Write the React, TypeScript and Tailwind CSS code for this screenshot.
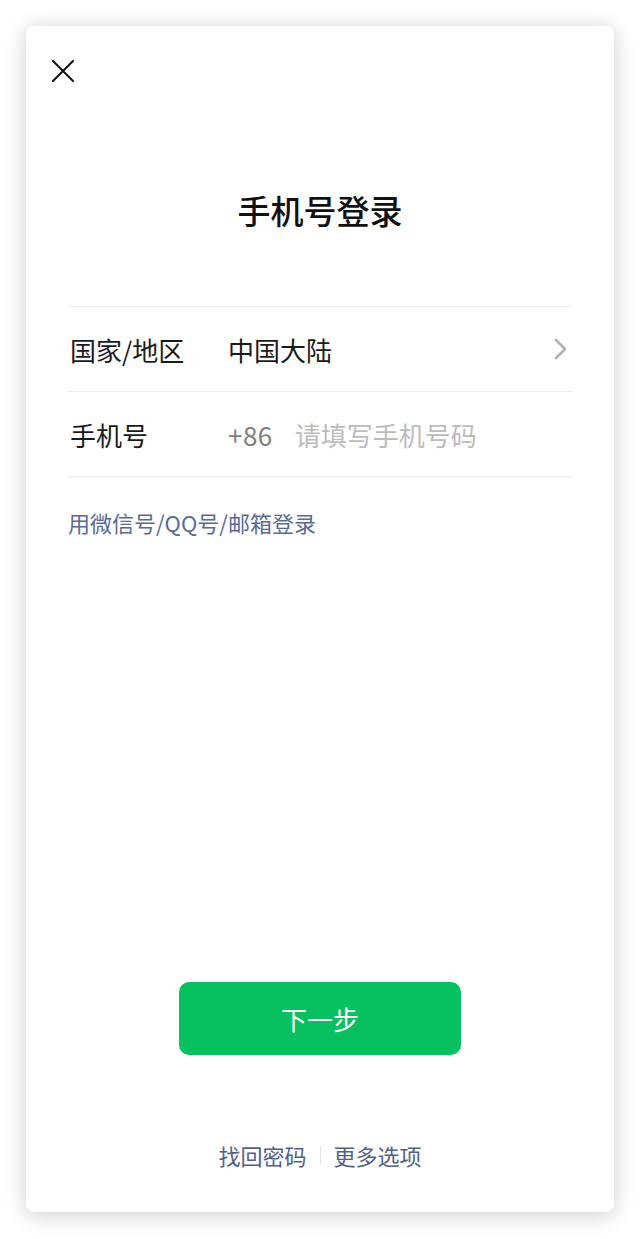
const font = { fontFamily: '"Noto Sans CJK SC", "Noto Sans", sans-serif' };

function CloseIcon() {
  return (
    <svg width="22" height="22" viewBox="0 0 22 22" className="text-[#111]">
      <path d="M1 1 L21 21 M21 1 L1 21" stroke="currentColor" strokeWidth="2" strokeLinecap="round" fill="none" />
    </svg>
  );
}

function Chevron() {
  return (
    <svg width="14" height="22" viewBox="0 0 14 22" className="mr-[4px] text-[#b2b2b2]">
      <path d="M2 2 L11 11 L2 20" stroke="currentColor" strokeWidth="2.6" strokeLinecap="round" strokeLinejoin="round" fill="none" />
    </svg>
  );
}

function FormRow({ label, children }: { label: string; children: React.ReactNode }) {
  return (
    <div className="flex h-[85px] items-center border-b border-[#ededed]">
      <div className="w-[160px] pl-[2px] text-[26px] text-[#1a1a1a]">{label}</div>
      <div className="flex flex-1 items-center">{children}</div>
    </div>
  );
}

export default function App() {
  return (
    <div className="min-h-[1239px] bg-white px-[26px] pt-[26px] pb-[27px]" style={font}>
      <div className="flex h-[1186px] flex-col rounded-[8px] bg-white shadow-[0_3px_22px_rgba(0,0,0,0.2)]">
        <div className="pl-[26px] pt-[34px]">
          <CloseIcon />
        </div>

        <h1 className="mt-[108px] text-center text-[33px] font-medium leading-[40px] text-[#111]">
          手机号登录
        </h1>

        <div className="mx-[42px] mt-[76px] border-t border-[#ededed]">
          <FormRow label="国家/地区">
            <span className="flex-1 text-[26px] text-[#1a1a1a]">中国大陆</span>
            <Chevron />
          </FormRow>
          <FormRow label="手机号">
            <span className="text-[26px] tracking-[0.5px] text-[#7f7f7f]">+86</span>
            <span className="ml-[22px] text-[26px] text-[#bcbcbc]">请填写手机号码</span>
          </FormRow>
        </div>

        <a className="mx-[42px] mt-[30px] text-[22px] leading-[30px] text-[#576b95]">
          用微信号/QQ号/邮箱登录
        </a>

        <div className="flex-1" />

        <button className="mx-auto flex h-[73px] w-[282px] items-center justify-center rounded-[10px] bg-[#07c160] text-[26px] text-white">
          下一步
        </button>

        <div className="mt-[85px] flex items-center justify-center pb-[42px] text-[22px] leading-[30px] text-[#52618a]">
          <span>找回密码</span>
          <span className="mx-[13px] h-[18px] w-px bg-[#e3e3e3]" />
          <span>更多选项</span>
        </div>
      </div>
    </div>
  );
}
